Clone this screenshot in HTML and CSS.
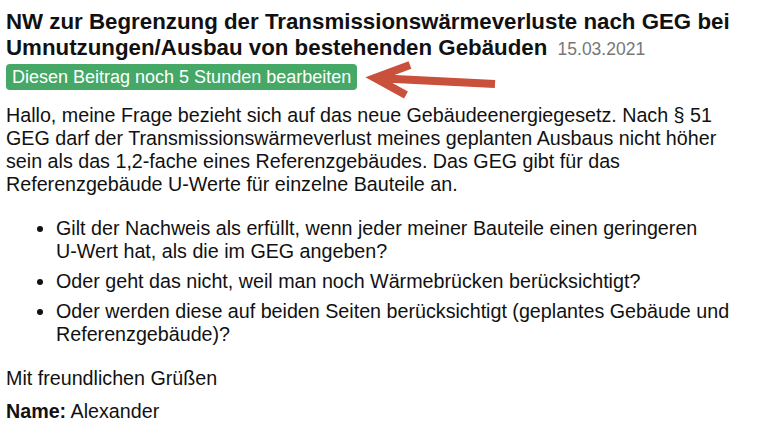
FILE: index.html
```html
<!DOCTYPE html>
<html lang="de">
<head>
    <meta charset="UTF-8">
    <meta name="viewport" content="width=device-width, initial-scale=1.0">
    <title>NW zur Begrenzung der Transmissionswärmeverluste</title>
    <link rel="stylesheet" href="styles.css">
</head>
<body>
  <div class="post">
    <h1 class="title">NW zur Begrenzung der Transmissionswärmeverluste nach GEG bei Umnutzungen/Ausbau von bestehenden Gebäuden <span class="date">15.03.2021</span></h1>

    <div class="edit-row">
      <a href="#" class="edit-badge">Diesen Beitrag noch 5 Stunden bearbeiten</a>
      <svg class="arrow" width="136" height="42" viewBox="0 0 136 42">
        <path d="M132 26 L12 20 M47 7 L12 20 L43 37" fill="none" stroke="#c9503b" stroke-width="8" stroke-linejoin="miter"/>
      </svg>
    </div>

    <p class="intro">Hallo, meine Frage bezieht sich auf das neue Gebäudeenergiegesetz. Nach § 51 GEG darf der Transmissionswärmeverlust meines geplanten Ausbaus nicht höher sein als das 1,2-fache eines Referenzgebäudes. Das GEG gibt für das Referenzgebäude U-Werte für einzelne Bauteile an.</p>

    <ul class="questions">
      <li>Gilt der Nachweis als erfüllt, wenn jeder meiner Bauteile einen geringeren <span class="nowrap">U-Wert</span> hat, als die im GEG angeben?</li>
      <li>Oder geht das nicht, weil man noch Wärmebrücken berücksichtigt?</li>
      <li>Oder werden diese auf beiden Seiten berücksichtigt (geplantes Gebäude und Referenzgebäude)?</li>
    </ul>

    <p class="greeting">Mit freundlichen Grüßen</p>
    <p class="author"><b>Name:</b> Alexander</p>
  </div>
</body>
</html>
```

FILE: styles.css
```css
*{
    margin: 0;
    padding: 0;
    box-sizing: border-box;
}
body{
    font-family: "Liberation Sans", Arial, sans-serif;
    color: #111;
    background: #fff;
}
.post{
    padding: 9px 6px 0;
    max-width: 750px;
    font-size: 19.7px;
    line-height: 23px;
}
.title{
    font-size: 22.3px;
    line-height: 26px;
    font-weight: bold;
    color: #111;
}
.date{
    font-size: 17.5px;
    font-weight: normal;
    color: #777;
    margin-left: 4px;
}
.edit-row{
    display: flex;
    align-items: center;
    margin-top: 2px;
    height: 26px;
}
.edit-badge{
    display: inline-block;
    background: #45a866;
    color: #fff;
    font-size: 18px;
    line-height: 26px;
    padding: 0 6px;
    border-radius: 4px;
    text-decoration: none;
}
.arrow{
    margin-left: 6px;
    margin-top: 4px;
}
.intro{
    margin-top: 14px;
}
.questions{
    margin: 21px 0 0 50px;
}
.questions li{
    margin-bottom: 7px;
}
.questions li:last-child{
    margin-bottom: 0;
}
.nowrap{
    white-space: nowrap;
}
.greeting{
    margin-top: 21px;
}
.author{
    margin-top: 10px;
}
```
